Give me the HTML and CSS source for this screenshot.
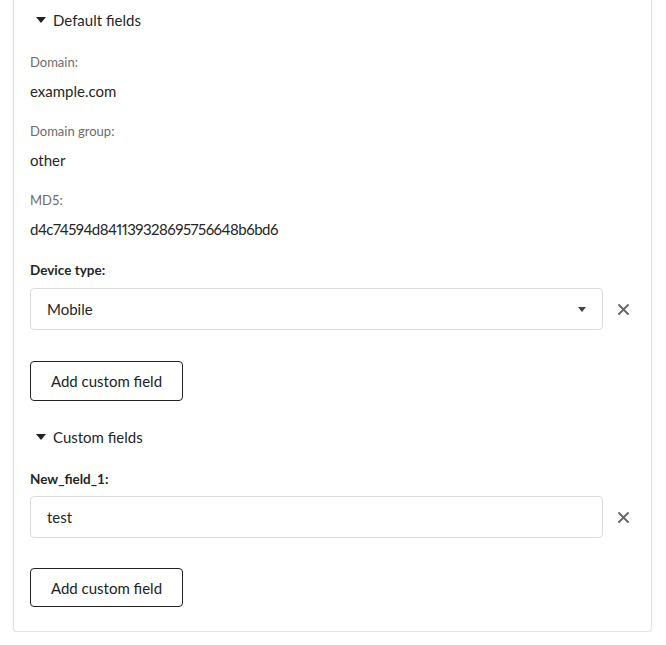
FILE: index.html
```html
<!DOCTYPE html>
<html>
<head>
<meta charset="utf-8">
<link rel="stylesheet" href="styles.css">
</head>
<body>
<div class="page">
  <div class="card">
    <div class="section-head">
      <svg class="tri" width="10" height="6" viewBox="0 0 10 6"><path d="M0 0H10L5 6Z" fill="#222"/></svg>
      <span>Default fields</span>
    </div>
    <div class="ro-field first">
      <div class="ro-label">Domain:</div>
      <div class="ro-value">example.com</div>
    </div>
    <div class="ro-field">
      <div class="ro-label">Domain group:</div>
      <div class="ro-value">other</div>
    </div>
    <div class="ro-field">
      <div class="ro-label">MD5:</div>
      <div class="ro-value hash">d4c74594d841139328695756648b6bd6</div>
    </div>
    <div class="edit-field">
      <div class="edit-label">Device type:</div>
      <div class="edit-row">
        <div class="box select">
          <span>Mobile</span>
          <svg class="caret" width="8" height="5" viewBox="0 0 8 5"><path d="M0 0H8L4 5Z" fill="#444"/></svg>
        </div>
        <svg class="close" width="11" height="11" viewBox="0 0 11 11"><path d="M1 1L10 10M10 1L1 10" stroke="#666" stroke-width="1.8" stroke-linecap="round"/></svg>
      </div>
    </div>
    <button class="btn first-btn">Add custom field</button>
    <div class="section-head custom">
      <svg class="tri" width="10" height="6" viewBox="0 0 10 6"><path d="M0 0H10L5 6Z" fill="#222"/></svg>
      <span>Custom fields</span>
    </div>
    <div class="edit-field custom-field">
      <div class="edit-label">New_field_1:</div>
      <div class="edit-row">
        <div class="box input"><span>test</span></div>
        <svg class="close" width="11" height="11" viewBox="0 0 11 11"><path d="M1 1L10 10M10 1L1 10" stroke="#666" stroke-width="1.8" stroke-linecap="round"/></svg>
      </div>
    </div>
    <button class="btn second-btn">Add custom field</button>
  </div>
</div>
</body>
</html>
```
FILE: styles.css
```css
* { box-sizing: border-box; }
html, body { margin: 0; padding: 0; background: #fff; }
body {
  font-family: "Lato", "Open Sans", sans-serif;
  color: #262626;
  font-size: 15px;
}
.page {
  padding: 0 14px 0 13px;
}
.card {
  border: 1px solid #e2e2e2;
  border-top: none;
  border-radius: 0 0 4px 4px;
  box-shadow: 0 1px 3px rgba(0,0,0,0.08);
  padding: 10px 22px 24px 16px;
}
.section-head {
  display: flex;
  align-items: center;
  height: 20px;
  line-height: 20px;
  font-size: 15px;
}
.section-head .tri {
  margin-left: 6px;
  margin-right: 7px;
}
.ro-field { margin-top: 21px; }
.ro-field.first { margin-top: 23px; }
.ro-label {
  font-size: 13px;
  line-height: 18px;
  color: #6b6b6b;
}
.ro-value {
  margin-top: 10px;
  font-size: 15px;
  line-height: 20px;
}
.hash {
  font-feature-settings: "pnum" 1;
  letter-spacing: -0.52px;
}
.edit-field { margin-top: 21px; }
.edit-label {
  font-size: 13.5px;
  line-height: 20px;
  font-weight: 700;
}
.edit-row {
  margin-top: 8px;
  display: flex;
  align-items: center;
}
.box {
  flex: 1;
  height: 42px;
  border: 1px solid #dcdcdc;
  border-radius: 4px;
  display: flex;
  align-items: center;
  padding: 0 16px;
  font-size: 15px;
}
.select { justify-content: space-between; }
.close { margin-left: 15px; flex: none; }
.btn {
  display: block;
  width: 153px;
  height: 40px;
  border: 1px solid #222;
  border-radius: 4px;
  background: #fff;
  color: #222;
  font-family: inherit;
  font-size: 15px;
  padding: 0;
}
.first-btn { margin-top: 31px; }
.section-head.custom { margin-top: 26px; }
.custom-field { margin-top: 22px; }
.custom-field .edit-row { margin-top: 7px; }
.second-btn { margin-top: 30px; height: 39px; }
```
